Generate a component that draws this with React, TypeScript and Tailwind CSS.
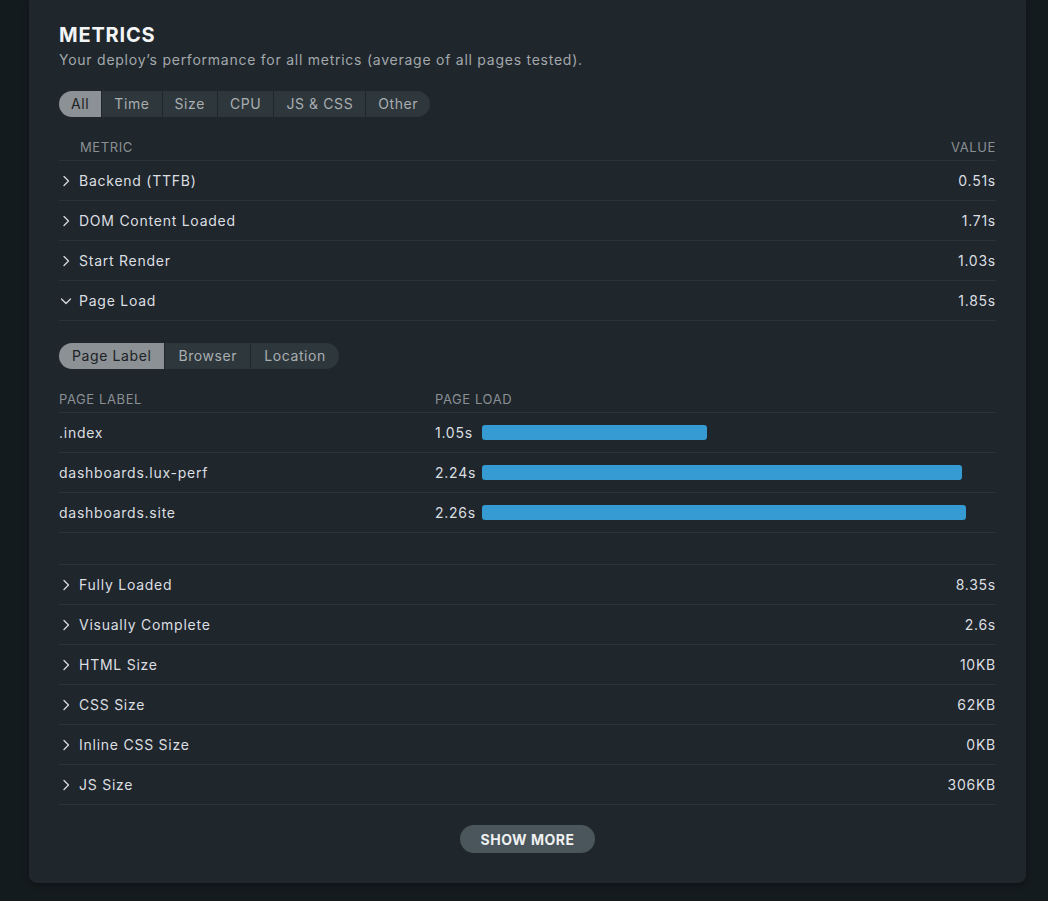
import React from "react";

const font = { fontFamily: "Inter, 'Open Sans', sans-serif" };

function Chevron({ open }: { open?: boolean }) {
  if (open) {
    return (
      <svg width="12" height="12" viewBox="0 0 12 12" className="shrink-0">
        <polyline points="1.5,4 6,8.5 10.5,4" fill="none" stroke="#d6dadc" strokeWidth="1.3" strokeLinecap="round" strokeLinejoin="round" />
      </svg>
    );
  }
  return (
    <svg width="12" height="12" viewBox="0 0 12 12" className="shrink-0">
      <polyline points="4,1.5 8.5,6 4,10.5" fill="none" stroke="#d6dadc" strokeWidth="1.3" strokeLinecap="round" strokeLinejoin="round" />
    </svg>
  );
}

function Segmented({ items, active, tight }: { items: string[]; active: number; tight?: boolean }) {
  return (
    <div className="flex gap-px rounded-full overflow-hidden self-start h-[26px]">
      {items.map((it, i) => (
        <div
          key={it}
          className={
            "flex items-center text-[14px] leading-none tracking-[0.6px] " +
            (tight ? "px-[12px] " : "px-[13px] ") +
            (i === active ? "bg-[#8b9194] text-[#1b2126]" : "bg-[#2e373c] text-[#a9aeb1]")
          }
        >
          {it}
        </div>
      ))}
    </div>
  );
}

function MetricRow({ label, value, open }: { label: string; value: string; open?: boolean }) {
  return (
    <div className="flex items-center h-10 border-b border-[#2b3339] tracking-[0.75px]">
      <div className="w-5 flex items-center pl-[1px]">
        <Chevron open={open} />
      </div>
      <div className="flex-1 text-[14px] text-[#dcdfe1]">{label}</div>
      <div className="text-[14px] text-[#dcdfe1]">{value}</div>
    </div>
  );
}

const pages = [
  { label: ".index", v: 1.05 },
  { label: "dashboards.lux-perf", v: 2.24 },
  { label: "dashboards.site", v: 2.26 },
];

export default function App() {
  const max = 2.26;
  return (
    <div className="min-h-screen bg-[#141b1e] pl-[29px] pb-[18px]" style={font}>
      <div className="w-[997px] bg-[#1f262c] rounded-b-lg shadow-[0_2px_6px_rgba(0,0,0,0.35)] px-[30px] pt-[21px] pb-[30px] flex flex-col">
        <div className="text-[20px] leading-7 font-bold text-[#f2f4f5] tracking-[0.8px]">METRICS</div>
        <div className="text-[14px] leading-5 text-[#a3a8ab] mt-[1px] tracking-[0.75px]">
          Your deploy’s performance for all metrics (average of all pages tested).
        </div>
        <div className="mt-[21px] flex">
          <Segmented items={["All", "Time", "Size", "CPU", "JS & CSS", "Other"]} active={0} tight />
        </div>

        <div className="mt-[22px] flex justify-between pl-[21px] pb-[5px] border-b border-[#2b3339] text-[13px] leading-4 text-[#8a9094] uppercase tracking-[0.6px]">
          <span>Metric</span>
          <span>Value</span>
        </div>
        <MetricRow label="Backend (TTFB)" value="0.51s" />
        <MetricRow label="DOM Content Loaded" value="1.71s" />
        <MetricRow label="Start Render" value="1.03s" />
        <MetricRow label="Page Load" value="1.85s" open />

        <div className="flex flex-col pt-[22px] pb-[31px] border-b border-[#2b3339]">
          <div className="flex">
            <Segmented items={["Page Label", "Browser", "Location"]} active={0} />
          </div>
          <div className="mt-[22px] flex pb-[5px] border-b border-[#2b3339] text-[13px] leading-4 text-[#8a9094] uppercase tracking-[0.6px]">
            <span className="w-[376px]">Page Label</span>
            <span>Page Load</span>
          </div>
          {pages.map((p) => (
            <div key={p.label} className="flex items-center h-10 border-b border-[#2b3339] text-[14px] text-[#dcdfe1] tracking-[0.75px]">
              <div className="w-[376px]">{p.label}</div>
              <div className="w-[47px]">{p.v.toFixed(2)}s</div>
              <div className="flex-1 flex items-center">
                <div
                  className="h-[15px] rounded-[3px] bg-[#359bd2]"
                  style={{ width: `${Math.round((p.v / max) * 484)}px` }}
                />
              </div>
            </div>
          ))}
        </div>

        <MetricRow label="Fully Loaded" value="8.35s" />
        <MetricRow label="Visually Complete" value="2.6s" />
        <MetricRow label="HTML Size" value="10KB" />
        <MetricRow label="CSS Size" value="62KB" />
        <MetricRow label="Inline CSS Size" value="0KB" />
        <MetricRow label="JS Size" value="306KB" />

        <div className="mt-5 flex justify-center">
          <button className="h-[28px] px-[21px] rounded-full bg-[#4a565b] text-[14px] font-bold text-[#eef0f1] tracking-[0.5px]">
            SHOW MORE
          </button>
        </div>
      </div>
    </div>
  );
}
